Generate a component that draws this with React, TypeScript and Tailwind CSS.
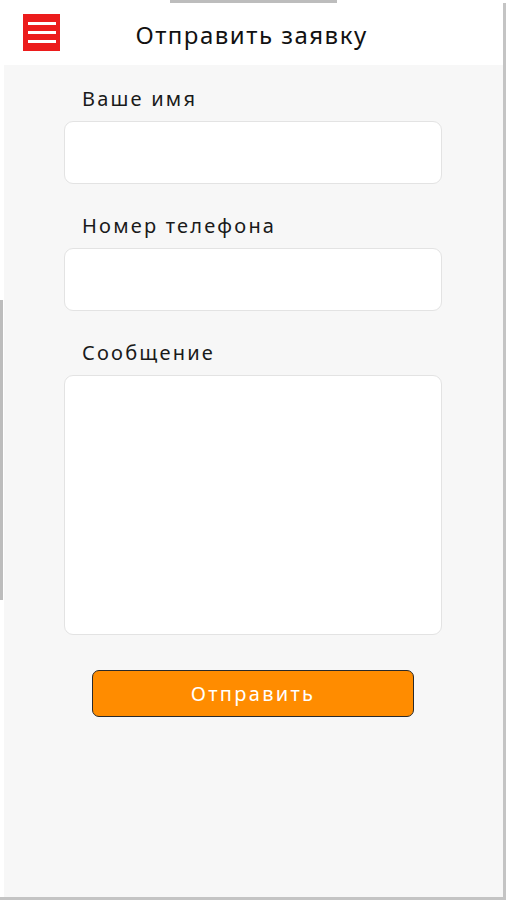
import React from 'react'

const font = { fontFamily: '"Noto Sans", "DejaVu Sans", sans-serif' }

function Field({ label, tall }: { label: string; tall?: boolean }) {
  return (
    <div className="flex flex-col">
      <label className="pl-[18px] text-[20px] leading-[28px] tracking-[2.2px] text-[#1a1a1a] mb-[8px]">
        {label}
      </label>
      {tall ? (
        <textarea className="h-[260px] w-full resize-none rounded-[9px] border border-[#e3e3e3] bg-white outline-none" />
      ) : (
        <input className="h-[63px] w-full rounded-[9px] border border-[#e3e3e3] bg-white outline-none" />
      )}
    </div>
  )
}

export default function App() {
  return (
    <div style={font} className="relative h-[900px] w-[506px] overflow-hidden bg-white">
      {/* frame decorations from the screenshot */}
      <div className="absolute left-[170px] top-0 h-[3px] w-[167px] bg-[#bdbdbd]" />
      <div className="absolute left-0 top-[300px] h-[300px] w-[3px] bg-[#bdbdbd]" />
      <div className="absolute right-0 top-[3px] bottom-0 w-[3px] bg-[#c4c4c4]" />
      <div className="absolute left-0 right-0 bottom-0 h-[3px] bg-[#c4c4c4]" />

      <div className="flex h-[897px] w-[503px] flex-col">
        {/* Header */}
        <header className="relative flex h-[65px] items-center justify-center">
          <button className="absolute left-[23px] top-[14px] flex h-[37px] w-[37px] flex-col items-center justify-center gap-[6px] bg-[#ec1c1c]">
            <span className="block h-[3px] w-[28px] bg-white" />
            <span className="block h-[3px] w-[28px] bg-white" />
            <span className="block h-[3px] w-[28px] bg-white" />
          </button>
          <h1 className="mt-[4px] text-[24px] tracking-[1.5px] text-[#111]">Отправить заявку</h1>
        </header>

        {/* Form */}
        <main className="ml-[4px] flex-1 bg-[#f7f7f7]">
          <form className="ml-[60px] flex w-[378px] flex-col gap-[28px] pt-[20px]">
            <Field label="Ваше имя" />
            <Field label="Номер телефона" />
            <Field label="Сообщение" tall />
          </form>
          <div className="ml-[88px] mt-[35px] w-[322px]">
            <button className="h-[47px] w-full rounded-[7px] border border-[#2a2a2a] bg-[#ff8c00] text-[20px] tracking-[2.3px] text-white">
              Отправить
            </button>
          </div>
        </main>
      </div>
    </div>
  )
}
